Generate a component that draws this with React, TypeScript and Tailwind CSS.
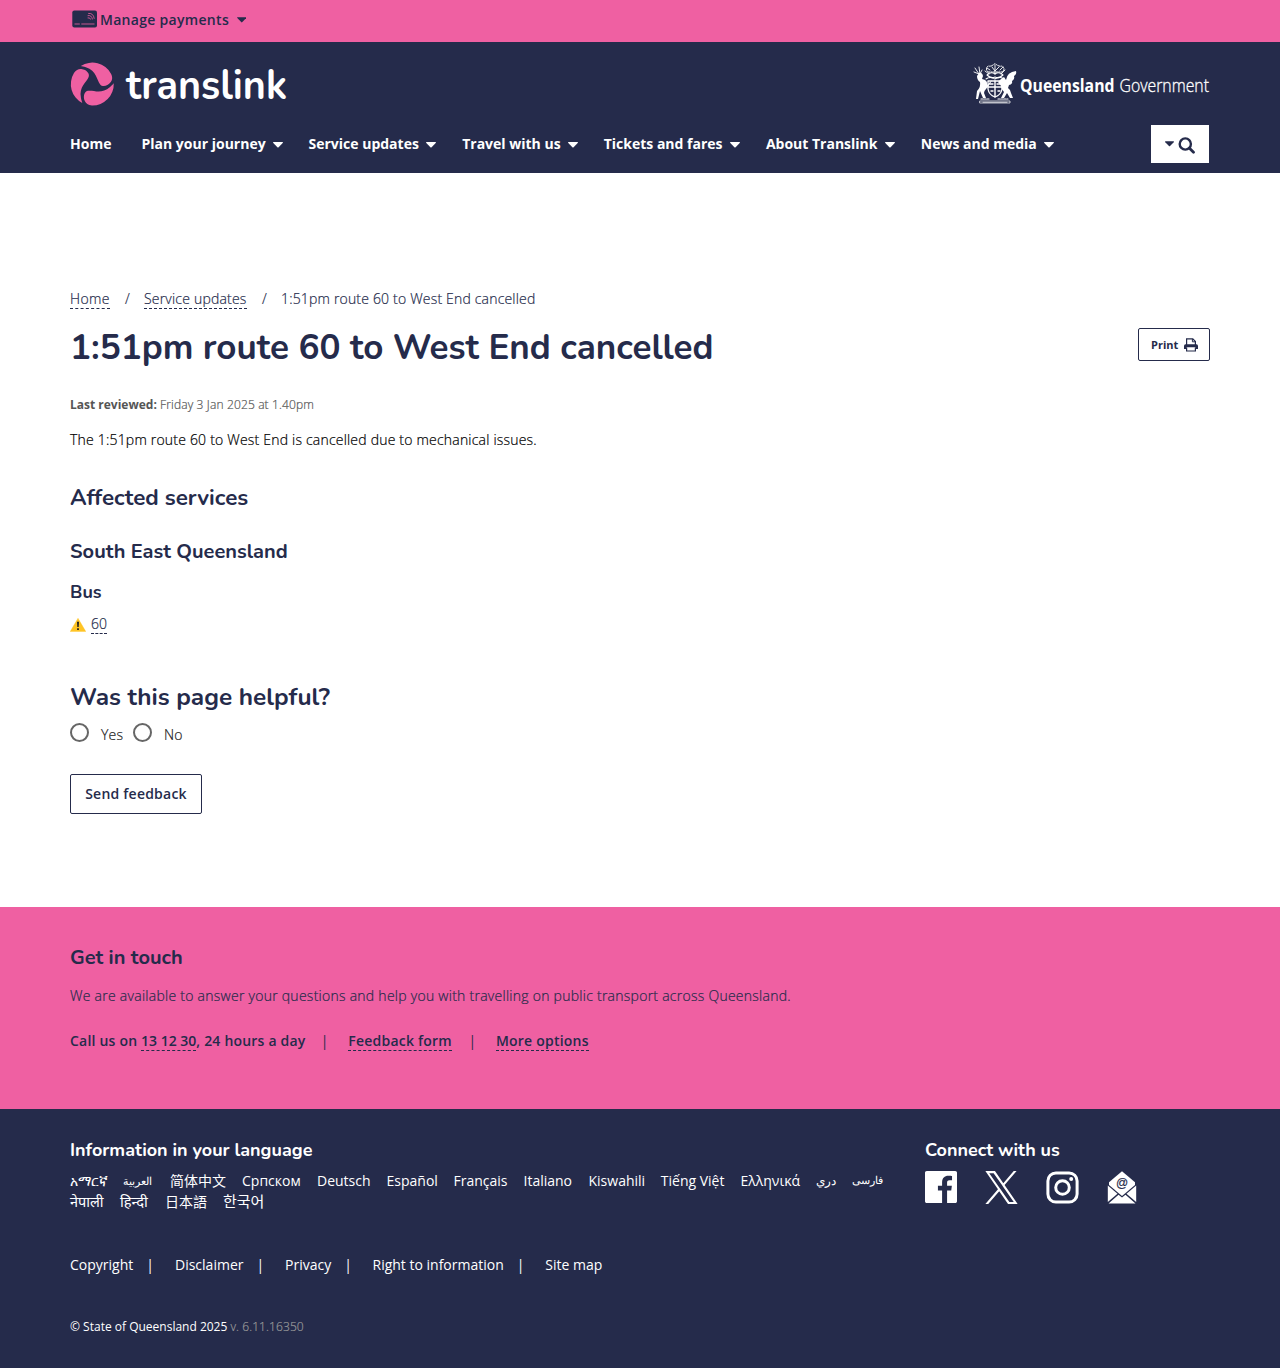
import React from "react";

const NAV = [
  { label: "Home", cls: "w-[71.5px]", caret: false },
  { label: "Plan your journey", cls: "w-[167px]", caret: true },
  { label: "Service updates", cls: "w-[153.7px]", caret: true },
  { label: "Travel with us", cls: "w-[141.5px]", caret: true },
  { label: "Tickets and fares", cls: "w-[162.2px]", caret: true },
  { label: "About Translink", cls: "w-[154.9px]", caret: true },
  { label: "News and media", cls: "w-[140px]", caret: true },
];

const LANGS_1 = [
  { t: "አማርኛ", cls: "w-[53px]" },
  { t: "العربية", cls: "w-[47px] text-[11px]" },
  { t: "简体中文", cls: "w-[72px]" },
  { t: "Српском", cls: "w-[75px]" },
  { t: "Deutsch", cls: "w-[69.5px]" },
  { t: "Español", cls: "w-[67px]" },
  { t: "Français", cls: "w-[70px]" },
  { t: "Italiano", cls: "w-[65px]" },
  { t: "Kiswahili", cls: "w-[72.3px]" },
  { t: "Tiếng Việt", cls: "w-[79.7px]" },
  { t: "Ελληνικά", cls: "w-[75.5px]" },
  { t: "دري", cls: "w-[36px] text-[12px]" },
  { t: "فارسی", cls: "w-[40px] text-[10.5px]" },
];
const LANGS_2 = [
  { t: "नेपाली", cls: "w-[50px] text-[14.5px]" },
  { t: "हिन्दी", cls: "w-[45px] text-[14.7px]" },
  { t: "日本語", cls: "w-[58px]" },
  { t: "한국어", cls: "w-[50px] text-[15px]" },
];
const LEGAL = [
  { t: "Copyright", cls: "w-[105px]", bar: true },
  { t: "Disclaimer", cls: "w-[110px]", bar: true },
  { t: "Privacy", cls: "w-[87.5px]", bar: true },
  { t: "Right to information", cls: "w-[172.8px]", bar: true },
  { t: "Site map", cls: "w-[80px]", bar: false },
];

function Caret({ className = "" }: { className?: string }) {
  return (
    <svg className={className} width="10" height="6" viewBox="0 0 10 6" fill="currentColor">
      <path d="M0.6 0H9.4Q10.4 0.2 9.7 1L5.6 5.2Q5 5.8 4.4 5.2L0.3 1Q-0.4 0.2 0.6 0Z" />
    </svg>
  );
}

function CardIcon() {
  return (
    <svg width="26" height="18" viewBox="0 0 26 18" fill="none">
      <rect x="0.3" y="0.4" width="24.7" height="17" rx="2" fill="#252b4b" />
      <path d="M2.5 14H7.8M9.3 14H22.5" stroke="#ef60a2" strokeWidth="0.8" />
      <g stroke="#ef60a2" strokeWidth="0.8" strokeLinecap="round">
        <path d="M16 5.6Q19.4 4.6 20.4 9" />
        <path d="M16 7.8Q18 7.2 18.6 9.2" />
        <path d="M16.6 3.4Q21.4 2.8 22.2 8.4" />
      </g>
    </svg>
  );
}

function TranslinkLogo() {
  const blade =
    "M-30 57A64 64 0 0 1 -55 -33C-49 -43 -40 -46 -33 -45C-16 -43 -7 -30 -11 -21C-17 -5 -41 8 -34 42C-33 49 -31 53 -30 57Z";
  return (
    <svg width="220" height="46" viewBox="0 0 220 46" className="block overflow-visible">
      <g transform="translate(22.3 22.1) scale(0.3333)" fill="#ef60a2">
        <path d={blade} />
        <path d={blade} transform="rotate(120)" />
        <path d={blade} transform="rotate(240)" />
      </g>
      <text
        x="56"
        y="37.4"
        textLength="161"
        lengthAdjust="spacingAndGlyphs"
        fill="#fff"
        className="font-['Nunito'] text-[41px] font-bold"
      >
        translink
      </text>
    </svg>
  );
}

function GovernmentLogo() {
  return (
    <svg width="238" height="44" viewBox="0 0 238 44" className="block overflow-visible">
      <g fill="none" stroke="#fff" strokeLinecap="round" strokeLinejoin="round">
        <path d="M15 10Q12 7 15 4Q18 5 22 1.5Q26 5 29 4Q33 7 29 10Z" strokeWidth="1" strokeDasharray="1.4 1.2" />
        <path d="M19 5L22 9L26 5M22 3V12M12 9L16 12M32 8L28 12M14 6L17 8M30 5L27 8" strokeWidth="0.9" />
        <path d="M14 13Q18 9 22 12Q26 9 30 13Q26 17 22 15Q18 17 14 13Z" strokeWidth="1.1" />
        <path d="M13 17Q17 14 22 17Q27 14 31 17" strokeWidth="1.1" strokeDasharray="2 1" />
        <path d="M15 19H29V27Q28 33 22 35Q16 33 15 27Z" strokeWidth="1.3" />
        <path d="M22 19V35M15 25H29M17 22H20M24 22H27M18 29H20M25 29H27" strokeWidth="1.4" />
        <path d="M2 6L6 12M1 10L6 12M6 5L7 12M9 8L7 12" strokeWidth="0.9" />
        <path d="M7 39H37V41H7ZM10 40.3H34" strokeWidth="0.7" />
        <path d="M8 37H17M25 37H35" strokeWidth="1.2" strokeDasharray="2 1" />
      </g>
      <g fill="#fff">
        <path d="M6 11Q9 10 10 14L9 17Q15 18 14 23L19 18L17 22L13 27Q11 29 11 31L13 36H10L7 29L5 37H3L4 29Q8 25 7 20Q4 18 4 14Z" />
        <path d="M28 17L31 15L33 18Q34 10 43 9Q44 12 41 14Q42 17 39 19Q40 22 36 23L35 26Q38 28 38 31L40 36H37L34 31L31 36H28L31 30Q28 27 28 24L25 20Z" />
      </g>
      <text
        x="47"
        y="29.5"
        textLength="94.5"
        lengthAdjust="spacingAndGlyphs"
        fill="#fff"
        className="font-['Open_Sans'] text-[17.5px] font-bold"
      >
        Queensland
      </text>
      <text
        x="146.5"
        y="29.5"
        textLength="89.5"
        lengthAdjust="spacingAndGlyphs"
        fill="#fff"
        stroke="#fff"
        strokeWidth="0.3"
        className="font-['Open_Sans'] text-[17.5px] font-light"
      >
        Government
      </text>
    </svg>
  );
}

function PrinterIcon() {
  return (
    <svg width="14" height="14" viewBox="0 0 14 14" fill="none">
      <path d="M2.6 7V0.9H8.8L11.4 3.5V7" stroke="#252b4b" strokeWidth="1.2" />
      <path d="M8.4 1V3.8H11.4" stroke="#252b4b" strokeWidth="1" />
      <path d="M0 8Q0 6.3 1.6 6.3H12.4Q14 6.3 14 8V11H11.5V9.3H2.5V11H0Z" fill="#252b4b" />
      <path d="M2.6 9.5V13H11.4V9.5" stroke="#252b4b" strokeWidth="1.2" />
    </svg>
  );
}

function FacebookIcon() {
  return (
    <svg width="32" height="32" viewBox="0 0 24 24" fill="#fff">
      <path d="M22.675 0H1.325C.593 0 0 .593 0 1.325v21.351C0 23.407.593 24 1.325 24H12.82v-9.294H9.692v-3.622h3.128V8.413c0-3.1 1.893-4.788 4.659-4.788 1.325 0 2.463.099 2.795.143v3.24l-1.918.001c-1.504 0-1.795.715-1.795 1.763v2.313h3.587l-.467 3.622h-3.12V24h6.116c.73 0 1.323-.593 1.323-1.325V1.325C24 .593 23.407 0 22.675 0z" />
    </svg>
  );
}

function XIcon() {
  return (
    <svg width="33" height="33" viewBox="0 0 1200 1227" fill="#fff">
      <path d="M714.163 519.284L1160.89 0H1055.03L667.137 450.887L357.328 0H0L468.492 681.821L0 1226.37H105.866L515.491 750.218L842.672 1226.37H1200L714.137 519.284H714.163ZM569.165 687.828L521.697 619.934L144.011 79.6944H306.615L611.412 515.685L658.88 583.579L1055.08 1150.3H892.476L569.165 687.854V687.828Z" />
    </svg>
  );
}

function InstagramIcon() {
  return (
    <svg width="33" height="33" viewBox="0 0 33 33" fill="none" stroke="#fff" strokeWidth="3">
      <rect x="1.9" y="1.9" width="29.2" height="29.2" rx="8" />
      <circle cx="16.5" cy="16.5" r="6.8" />
      <circle cx="25.2" cy="7.9" r="2" fill="#fff" stroke="none" />
    </svg>
  );
}

function EmailIcon() {
  return (
    <svg width="30" height="33" viewBox="0 0 30 33">
      <path d="M15 0.3L28 11.3V14L15 25L2 14V11.3Z" fill="#fff" />
      <path d="M0.8 14.5L10.5 22.8L0.8 31Z" fill="#fff" />
      <path d="M29.2 14.5L19.5 22.8L29.2 31Z" fill="#fff" />
      <path d="M1.5 32.4L11.5 23.8L15 26.6L18.5 23.8L28.5 32.4Z" fill="#fff" />
      <text x="15" y="16.2" textAnchor="middle" fill="#252b4b" stroke="#252b4b" strokeWidth="0.2" className="font-['Liberation_Sans'] text-[12px]">
        @
      </text>
    </svg>
  );
}

const LINK = "box-border h-[20px] border-b border-dashed border-[#252b4b] leading-[19px] whitespace-nowrap";
const HEAD = "font-['Nunito',sans-serif] font-bold whitespace-nowrap";
const LIGHT = "font-light [-webkit-text-stroke:0.2px]";

export default function App() {
  return (
    <div className="flex h-[1368px] w-[1280px] flex-col overflow-hidden bg-white font-['Open_Sans','Noto_Sans','Noto_Sans_CJK_SC',sans-serif] text-[14px] text-[#252b4b]">
      <div className="h-[42px] bg-[#ef60a2] px-[70px]">
        <div className="flex h-[39px] items-center">
          <span className="mb-[2px] ml-[1.5px]"><CardIcon /></span>
          <span className="ml-[2.5px] w-[129px] font-semibold tracking-[0.3px] whitespace-nowrap">Manage payments</span>
          <Caret className="ml-[7.5px] w-[9.5px]" />
        </div>
      </div>

      <header className="h-[131px] bg-[#252b4b] px-[70px] text-white">
        <div className="flex justify-between pt-[20px]">
          <TranslinkLogo />
          <div className="-mr-[1px]"><GovernmentLogo /></div>
        </div>
        <div className="mt-[17px] flex h-[38px] justify-between">
          <nav className="flex h-[36px] items-center font-bold">
            {NAV.map((n) => (
              <div key={n.label} className={`flex shrink-0 items-center whitespace-nowrap ${n.cls}`}>
                <span>{n.label}</span>
                {n.caret && <Caret className="mt-[3px] ml-[7.5px]" />}
              </div>
            ))}
          </nav>
          <div className="mr-[1px] flex w-[58px] items-center bg-white pl-[14px] text-[#252b4b]">
            <Caret className="w-[9px]" />
            <svg className="mt-[3px] ml-[4px]" width="18" height="17" viewBox="0 0 18 17" fill="none" stroke="currentColor">
              <circle cx="7.3" cy="7" r="5.6" strokeWidth="2.4" />
              <path d="M11.5 11.2L15.5 15.2" strokeWidth="2.8" strokeLinecap="round" />
            </svg>
          </div>
        </div>
      </header>

      <main className="h-[734px] px-[70px] pt-[116px]">
        <div className={`flex h-[20px] leading-[19px] whitespace-nowrap ${LIGHT}`}>
          <a className={`w-[40px] tracking-[0.4px] ${LINK}`}>Home</a>
          <span className="ml-[15px] w-[19px]">/</span>
          <a className={`w-[103px] tracking-[0.2px] ${LINK}`}>Service updates</a>
          <span className="ml-[15px] w-[19px]">/</span>
          <span className="tracking-[0.18px]">1:51pm route 60 to West End cancelled</span>
        </div>
        <div className="mt-[13px] flex h-[48px] justify-between">
          <h1 className={`mt-[2px] text-[35px] leading-[48px] ${HEAD}`}>1:51pm route 60 to West End cancelled</h1>
          <button className="mt-[6px] flex h-[33px] w-[72px] items-center rounded-[2px] border border-[#252b4b] pl-[12px] text-[11px] font-bold">
            <span className="mt-[2px] w-[33px] text-left">Print</span>
            <PrinterIcon />
          </button>
        </div>
        <p className={`mt-[25px] h-[20px] text-[12px] leading-[20px] tracking-[0.14px] text-[#555] ${LIGHT}`}>
          <b className="font-bold tracking-[0px] [-webkit-text-stroke:0px]">Last reviewed:</b> Friday 3 Jan 2025 at 1.40pm
        </p>
        <p className={`mt-[15px] h-[20px] leading-[20px] tracking-[0.2px] text-black ${LIGHT}`}>
          The 1:51pm route 60 to West End is cancelled due to mechanical issues.
        </p>
        <h2 className={`mt-[33px] h-[30px] text-[22.4px] leading-[30px] ${HEAD}`}>Affected services</h2>
        <h3 className={`mt-[23px] h-[30px] text-[20px] leading-[31px] ${HEAD}`}>South East Queensland</h3>
        <h4 className={`mt-[14px] h-[24px] text-[18px] leading-[24px] ${HEAD}`}>Bus</h4>
        <div className={`mt-[10px] flex h-[20px] ${LIGHT}`}>
          <svg className="mt-[4px] mr-[5px]" width="16" height="14" viewBox="0 0 16 14">
            <path d="M8 0.3L15.8 13.6H0.2Z" fill="#ffc425" stroke="#ffc425" strokeWidth="0.4" strokeLinejoin="round" />
            <path d="M7 3.8H9L8.7 9H7.3ZM7.1 10.2H8.9V12H7.1Z" fill="#222" />
          </svg>
          <a className={LINK}>60</a>
        </div>
        <h2 className={`mt-[47px] h-[32px] text-[24.4px] leading-[32px] ${HEAD}`}>Was this page helpful?</h2>
        <div className={`mt-[10px] flex h-[20px] text-[#222] ${LIGHT}`}>
          <span className="h-[19px] w-[19px] rounded-full border-2 border-[#666]" />
          <span className="mt-[2px] ml-[12px] w-[32px] leading-[20px] tracking-[0.2px]">Yes</span>
          <span className="h-[19px] w-[19px] rounded-full border-2 border-[#666]" />
          <span className="mt-[2px] ml-[12px] leading-[20px] tracking-[0.2px]">No</span>
        </div>
        <button className="mt-[31px] h-[40px] w-[132px] rounded-[2px] border border-[#252b4b] pb-[2px] text-[14px] font-semibold tracking-[0.22px] whitespace-nowrap">
          Send feedback
        </button>
      </main>

      <section className="h-[202px] bg-[#ef60a2] px-[70px] pt-[35px]">
        <h3 className={`h-[30px] text-[20px] leading-[31px] ${HEAD}`}>Get in touch</h3>
        <p className={`mt-[14px] h-[20px] leading-[20px] tracking-[0.26px] ${LIGHT}`}>
          We are available to answer your questions and help you with travelling on public transport across Queensland.
        </p>
        <div className="mt-[25px] flex h-[20px] leading-[19px] font-semibold whitespace-nowrap">
          <span className="w-[71px] tracking-[0.2px]">Call us on</span>
          <a className={LINK}>13 12 30</a>
          <span className="w-[124px] tracking-[0.2px]">, 24 hours a day</span>
          <span className="w-[28px] pl-[0.5px] font-normal">|</span>
          <a className={`tracking-[0.22px] ${LINK}`}>Feedback form</a>
          <span className="ml-[16.5px] w-[27.5px] font-normal">|</span>
          <a className={`tracking-[0.22px] ${LINK}`}>More options</a>
        </div>
      </section>

      <footer className="h-[259px] bg-[#252b4b] px-[70px] pt-[28px] text-white">
        <div className="flex">
          <div className="w-[855px]">
            <h3 className={`h-[26px] text-[18px] leading-[26px] ${HEAD}`}>Information in your language</h3>
            <div className="mt-[7px] flex h-[21px] leading-[21px] whitespace-nowrap">
              {LANGS_1.map((l) => (
                <a key={l.t} className={`shrink-0 leading-[21px] ${l.cls}`}>{l.t}</a>
              ))}
            </div>
            <div className="flex h-[21px] leading-[21px] whitespace-nowrap">
              {LANGS_2.map((l) => (
                <a key={l.t} className={`shrink-0 leading-[21px] ${l.cls}`}>{l.t}</a>
              ))}
            </div>
          </div>
          <div>
            <h3 className={`h-[26px] text-[18px] leading-[26px] ${HEAD}`}>Connect with us</h3>
            <div className="mt-[8px] flex">
              <div className="w-[60px]"><FacebookIcon /></div>
              <div className="w-[61px]"><XIcon /></div>
              <div className="w-[61px]"><InstagramIcon /></div>
              <EmailIcon />
            </div>
          </div>
        </div>
        <div className="mt-[43px] flex h-[20px] leading-[20px] whitespace-nowrap">
          {LEGAL.map((l) => (
            <div key={l.t} className={`flex shrink-0 ${l.cls}`}>
              <a>{l.t}</a>
              {l.bar && <span className="ml-[13px]">|</span>}
            </div>
          ))}
        </div>
        <p className="mt-[42px] h-[20px] text-[12px] leading-[20px]">
          © State of Queensland 2025 <span className={`tracking-[0.1px] text-[#999] ${LIGHT}`}>v. 6.11.16350</span>
        </p>
      </footer>
    </div>
  );
}
